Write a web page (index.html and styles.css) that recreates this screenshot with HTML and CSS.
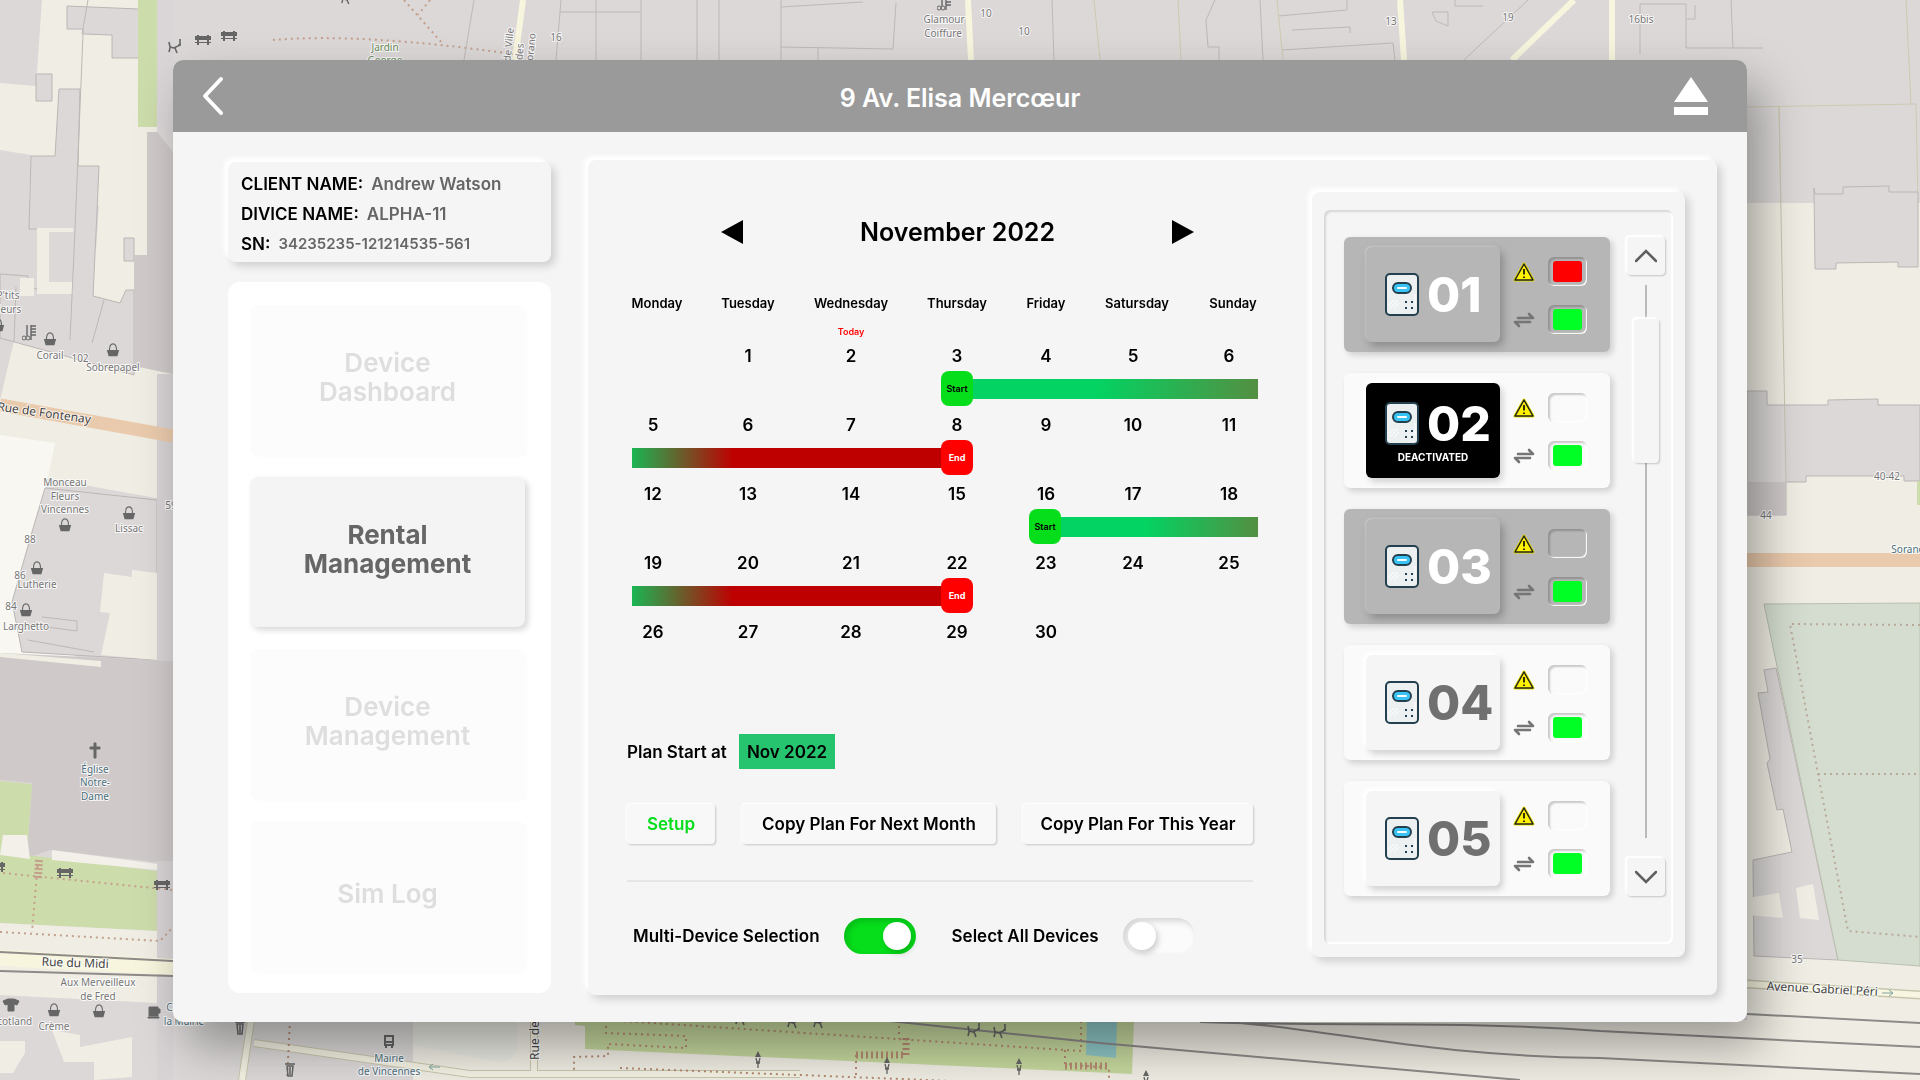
FILE: index.html
```html
<!DOCTYPE html>
<html lang="en">
<head>
<meta charset="utf-8">
<meta name="viewport" content="width=device-width, initial-scale=1">
<title>9 Av. Elisa Mercœur – Rental Management</title>
<link rel="stylesheet" href="styles.css">
</head>
<body>
<svg class="map" viewBox="0 0 1920 1080" preserveAspectRatio="xMidYMid slice" aria-hidden="true">
  <defs>
    <symbol id="basket" viewBox="0 0 14 16"><path d="M3 8C3 3 5 1 7 1s4 2 4 7" fill="none" stroke="#666" stroke-width="1.2"/><path d="M0 8h14l-2 7H2z" fill="#666"/></symbol>
    <symbol id="bench" viewBox="0 0 16 10"><path d="M0 1h16v4H0zM0 7h16v1H0zM2 0h2v10H2zM12 0h2v10h-2z" fill="#666"/></symbol>
    <symbol id="play" viewBox="0 0 14 16"><path d="M1 4l1 5 4 1 6-3V1M2 10l-1 4M7 10l2 5M10 7h3" fill="none" stroke="#666" stroke-width="1.6"/></symbol>
    <symbol id="bin" viewBox="0 0 10 15"><path d="M0 2h10M2 4l1 10h4l1-10zM5 5v8" fill="none" stroke="#666" stroke-width="1.5"/></symbol>
    <symbol id="lamp" viewBox="0 0 8 17"><path d="M4 0l3 6H1z" fill="#666"/><path d="M2 7l1 4h2l1-4M4 11v6M2 12h4" fill="none" stroke="#666" stroke-width="1.3"/></symbol>
    <symbol id="scissors" viewBox="0 0 14 16"><path d="M5 0v11M9 0v15M9 1h5M9 4h5M9 7h5M9 10h5" stroke="#666" stroke-width="1.4"/><circle cx="2" cy="13" r="2" fill="none" stroke="#666"/><circle cx="6" cy="13" r="2" fill="none" stroke="#666"/></symbol>
  </defs>
  <rect width="1920" height="1080" fill="#dcd8d8"/>

  <!-- west side -->
  <g fill="#f0eee4">
    <path d="M42 0h96v127h19v5h-10v123h-13v35h-8l-6 13-27-7 6-90h-3v78l-28 1 4-82H60l-31-3 2-45-31-5V83l36 3z"/>
    <path d="M14 341l159 33v127L0 470v-70z"/>
    <path d="M0 435l55 8-25 120-15 50 85 60-100-10z" fill="#f8f7f1"/>
  </g>
  <g fill="#dcd8d8" stroke="#bcb6b5" stroke-width="1">
    <path d="M67 6l72 3v49h-27V35l-29-1v-5H67zM36 74h16v27H36zM59 89h21l-2 77h21l-2 46-4 84 27 7 6-13h8v85L0 338v-64l28 2v11l8 2 12-3V229H29l2-73h24z"/>
    <path d="M45 488l112 12v160L22 652l-10-50 20-70z"/>
    <path d="M124 238h10v23h-10z"/>
  </g>
  <path d="M20 278h14v18h-14zM37 228h36v66H37z" fill="#f0eee4"/>
  <path d="M49 232h24v50H49z" fill="#dcd8d8"/>
  <path d="M104 573l28 4v-7l25 3v87l-56-5 9-42-10-1z" fill="#f0eee4"/>
  <path d="M134 255h13V132h10l16 20v222l-39-8z" fill="#cfc9c9"/>
  <path d="M157 120l16 20V0h-16z" fill="#dad6d7"/>
  <path d="M138 0h19v127h-19z" fill="#cddcab"/>
  <path d="M0 653l173 8v203L50 850l-23 8 5-75-32-3z" fill="#cfc9c9"/>
  <path d="M0 653l101 8v6l-101-10z" fill="#f0eee4"/>
  <path d="M0 781l32 3-5 71 130 16v60L0 923z" fill="#cddcab"/>
  <path d="M3 835h24l3 24-30-4zM52 850l105 14v6L52 860z" fill="#f2f0e8"/>
  <path d="M0 923l157 8v72L0 995z" fill="#f0eee4"/>
  <path d="M157 374h16v287h-16zM157 861h16v219h-16z" fill="#d8d4d5"/>
  <path d="M52 1030l28 5v12l52-10v40l-38 3v-18H64zM0 1041h25v12l-12 20H0z" fill="#f0eee4"/>
  <path d="M0 405l173 31" stroke="#eacaac" stroke-width="13"/>
  <path d="M0 958l173 9" stroke="#f7f5dd" stroke-width="16"/>
  <path d="M0 952l173 9M0 971l173 5" stroke="#8d8a88" stroke-width="2"/>
  <g fill="none" stroke="#c4a08c" stroke-width="2" stroke-dasharray="2 4">
    <path d="M3 873l170 17M38 860l-6 72M0 932l160 9 13-14M273 40c60-5 140 0 240 14M404 0l38 43M430 0l-12 15"/>
    <path d="M39 860l-1 18" stroke-width="8" stroke-dasharray="2 2"/>
  </g>
  <g fill="none" stroke="#beb8b7" stroke-width="1">
    <path d="M88 0l-6 34M83 34L75 230 70 340M104 300L92 343M16 287l-2 55M474 0l-10 60M561 0l-5 60M596 0v60M560 12h80M42 617l35 4v10l-38-5M28 640l66 12"/>
    <path d="M641 0v60M697 0v60M719 0v60M781 0v60M781 7l82-5M781 47l112 2 3-46M818 47v13M1052 0l2 60M1215 0l-9 20 2 27h11v13M1260 0l3 60M1347 0v10l-69 6M1292 30l58-3v6M1282 50l111-7 2 17M1455 0v6l28 0M1528 0l-64 60M1640 4h46v44h77M1695 5v14h-8M1731 0l2 48M1640 4v50"/>
    <path d="M1432 12h16v14l-12-5z"/>
  </g>
  <g fill="none" stroke="#cfc9b0" stroke-width="1"><path d="M1094 0l6 60M1178 0l3 60M1277 0l6 60M1906 0l5 104M1747 107l169-3 4 200M1779 107l7 375"/></g>
  <g fill="none" stroke="#f7f5dd" stroke-width="6"><path d="M968 0l3 60M1400 0l4 60M1574 0l-62 60M523 0l-8 60M1612 0v60"/></g>

  <!-- east side -->
  <path d="M1747 203h173v860h-173z" fill="#f0eee4"/>
  <g fill="#dcd8d8" stroke="#bcb6b5">
    <path d="M1814 188l1 6h28v-7l46-1v6h29v75h-20v-5l-62 1v6h-21z"/>
    <path d="M1747 391h20v14h61v-5l50-1v6h42v76h-16v-5h-98v6h-20v33h-39z"/>
    <path d="M1776 668l-12 2 4 22-10 1 12 66-3 4 10 47 6-1 9 43-39 8 1 96 84 4z"/>
  </g>
  <path d="M1747 898l32-5 4 25-36-3zM1796 888l17-4 6 36-19-2z" fill="#f0eee4"/>
  <path d="M1786 482h-39v33h39z" fill="#cfc9c9"/>
  <path d="M1764 604l156-1v363l-82-6z" fill="#d5ddd0" stroke="#b9c0ae"/>
  <path d="M1917 481h3v24h-3z" fill="#cddcab"/>
  <path d="M1747 560h173" stroke="#eacaac" stroke-width="14"/>
  <path d="M1779 107l7 375" stroke="#c9c5b2" fill="none"/>
  <path d="M1920 625l-130-1 28 150 30 157 72 6M1818 774h102" fill="none" stroke="#b9a999" stroke-width="2" stroke-dasharray="2 4"/>
  <path d="M1747 984l173 11" stroke="#c8c6ad" stroke-width="9"/><path d="M1747 984l173 11" stroke="#f8f6e2" stroke-width="6"/>

  <!-- south side -->
  <path d="M413 1020h1507v60H413z" fill="#efece3"/>
  <path d="M413 1020h104v28q-4 16-20 14l-84-17z" fill="#e9e9e2"/>
  <path d="M575 1020h559l-2 54-547-25v-23l-10-1z" fill="#c5d79d"/>
  <path d="M1087 1020h30l-1 38-30-3z" fill="#8ec6c6"/>
  <path d="M251 1020l-9 60M254 1043l216 31h330M534 1020v54" fill="none" stroke="#c8c6ad" stroke-width="8"/>
  <path d="M251 1020l-9 60M254 1043l216 31h330M534 1020v54" fill="none" stroke="#f3f1e2" stroke-width="6"/>
  <path d="M606 1020l475 31v-31M606 1020v13l80 3v12l-78-4v12l-34 1v15M620 1068l460 18M899 1026v13M856 1055v22M1065 1050v14l44 4v16M290 1020l-3 60" fill="none" stroke="#b58a72" stroke-width="2" stroke-dasharray="2 4"/>
  <path d="M856 1055h50v-18M1065 1066h44" fill="none" stroke="#b58a72" stroke-width="7" stroke-dasharray="2 3"/>
  <path d="M880 1020l220 23 420 37M1165 1020c150 0 220 35 435 38l320 16M1200 1022c140 5 250-2 400 9l320 16M1747 1014l173 9" fill="none" stroke="#8d8a88" stroke-width="2"/>

  <use href="#play" x="168" y="38" width="14" height="16"/><use href="#bench" x="195" y="35" width="16" height="10"/><use href="#bench" x="221" y="31" width="16" height="10"/><use href="#play" x="341" y="-10" width="12" height="16"/>
  <use href="#scissors" x="22" y="325" width="14" height="16"/><use href="#basket" x="43" y="332" width="14" height="14"/><use href="#basket" x="106" y="343" width="14" height="14"/><use href="#basket" x="-9" y="318" width="14" height="14"/>
  <use href="#basket" x="58" y="518" width="14" height="14"/><use href="#basket" x="122" y="506" width="14" height="14"/><use href="#basket" x="30" y="561" width="14" height="14"/><use href="#basket" x="19" y="603" width="14" height="14"/>
  <use href="#bench" x="57" y="868" width="16" height="10"/><use href="#bench" x="154" y="880" width="16" height="10"/><use href="#bench" x="-11" y="862" width="16" height="10"/>
  <use href="#basket" x="47" y="1003" width="14" height="14"/><use href="#basket" x="92" y="1004" width="14" height="14"/>
  <path d="M3 1001l5-2h6l5 2-2 4-3-1v7H8v-7l-3 1zM149 1007h9v9h-9zM158 1009h2v4h-2zM148 1017h11v1h-11zM94 743h2v15h-2zM90 747h10v2H90z" fill="#666" stroke="#666"/>
  <use href="#bin" x="235" y="1020" width="10" height="15"/><use href="#bin" x="285" y="1062" width="10" height="15"/>
  <path d="M385 1036h8v9h-8zM385 1042h8M386 1046v2M392 1046v2" fill="none" stroke="#666" stroke-width="2"/>
  <use href="#play" x="735" y="1010" width="14" height="16"/><use href="#play" x="787" y="1013" width="14" height="16"/><use href="#play" x="813" y="1013" width="14" height="16"/><use href="#play" x="967" y="1022" width="14" height="16"/><use href="#play" x="993" y="1023" width="14" height="16"/>
  <use href="#lamp" x="754" y="1051" width="8" height="17"/><use href="#lamp" x="883" y="1057" width="8" height="17"/><use href="#lamp" x="1015" y="1058" width="8" height="17"/><use href="#lamp" x="1142" y="1070" width="8" height="17"/>
  <use href="#scissors" x="937" y="-5" width="14" height="16"/>

  <g class="map-text" text-anchor="middle">
    <g fill="#6b8a5a"><text x="385" y="51">Jardin</text><text x="385" y="64">George</text></g>
    <text x="8" y="299">P'tits</text><text x="7" y="313">Fleurs</text><text x="50" y="359">Corail</text><text x="80" y="362">102</text><text x="113" y="371">Sobrepapel</text>
    <text x="65" y="486">Monceau</text><text x="65" y="500">Fleurs</text><text x="65" y="513">Vincennes</text><text x="129" y="532">Lissac</text><text x="30" y="543">88</text><text x="20" y="579">86</text><text x="37" y="588">Lutherie</text><text x="11" y="610">84</text><text x="26" y="630">Larghetto</text><text x="171" y="509">59</text>
    <g fill="#4d707c"><text x="95" y="773">Église</text><text x="95" y="786">Notre-</text><text x="95" y="800">Dame</text><text x="389" y="1062">Mairie</text><text x="389" y="1075">de Vincennes</text><text x="184" y="1011">Café de</text><text x="184" y="1025">la Mairie</text><text x="1908" y="553">Sorano</text></g>
    <text x="98" y="986">Aux Merveilleux</text><text x="98" y="1000">de Fred</text><text x="12" y="1025">Scotland</text><text x="54" y="1030">Crème</text>
    <text x="944" y="23">Glamour</text><text x="943" y="37">Coiffure</text><text x="556" y="41">16</text><text x="986" y="17">10</text><text x="1024" y="35">10</text><text x="1391" y="25">13</text><text x="1508" y="21">19</text><text x="1641" y="23">16bis</text><text x="1887" y="480">40-42</text><text x="1766" y="519">44</text><text x="1797" y="963">35</text>
    <g class="map-street"><text transform="rotate(8 44 414)" x="44" y="417">Rue de Fontenay</text><text x="75" y="967" transform="rotate(2 75 967)">Rue du Midi</text><text x="1822" y="993" transform="rotate(3 1822 993)">Avenue Gabriel Péri</text><text x="539" y="1034" transform="rotate(-90 539 1034)">Rue de la</text></g>
    <text x="512" y="45" transform="rotate(-84 512 45)">de Ville</text><text x="523" y="52" transform="rotate(-84 523 52)">des</text><text x="534" y="50" transform="rotate(-84 534 50)">Sorano</text>
    <path d="M1882 993h10M1889 990l4 3-4 3M440 1067h-10M433 1064l-4 3 4 3" fill="none" stroke="#7ea39d" stroke-width="1"/>
  </g>
</svg>

<svg class="sprite" aria-hidden="true">
  <symbol id="device" viewBox="0 0 34 44">
    <path d="M6 41h4v2H6zM24 41h4v2h-4z" fill="#24404f"/>
    <rect x="1" y="1" width="32" height="41" rx="4" fill="#ecf0f1" stroke="#24404f" stroke-width="2"/>
    <rect x="8" y="10" width="18" height="10" rx="5" fill="#39c3f5" stroke="#24404f" stroke-width="2"/>
    <path d="M13 15h8" stroke="#fff" stroke-width="2" stroke-linecap="round"/>
    <path d="M4 32l5-5M5 35l8-8M9 35l5-5M30 21v12" stroke="#fff" stroke-width="1"/>
    <path d="M20 28h2v2h-2zM26 28h2v2h-2zM20 34h2v2h-2zM26 34h2v2h-2z" fill="#24404f"/>
  </symbol>
  <symbol id="warn" viewBox="0 0 22 20">
    <path d="M11 2L2 18h18z" fill="#fff200" stroke="#e6e000" stroke-width="3" stroke-linejoin="round"/>
    <path d="M11 2L2 18h18z" fill="#fff200" stroke="#222" stroke-width="1.5" stroke-linejoin="round"/>
    <path d="M11 7v5.5M11 14.500v1.500" stroke="#111" stroke-width="1.7"/>
  </symbol>
  <symbol id="swap" viewBox="0 0 22 16">
    <path d="M5 6h15l-4-4M17 10H2l4 4" fill="none" stroke="#757575" stroke-width="2.600" stroke-linecap="round" stroke-linejoin="round"/>
  </symbol>
</svg>

<main class="window">
  <header class="topbar">
    <button class="bare" aria-label="Back"><svg width="24" height="40" viewBox="0 0 24 40"><path d="M20 3L4 20l16 17" fill="none" stroke="#fff" stroke-width="4" stroke-linecap="round" stroke-linejoin="round"/></svg></button>
    <h1>9 Av. Elisa Mercœur</h1>
    <button class="bare eject" aria-label="Eject"><svg width="34" height="40" viewBox="0 0 34 40"><path d="M17 1l17 25H0zM0 31h34v8H0z" fill="#fff"/></svg></button>
  </header>

  <div class="content">
    <aside class="side">
      <dl class="client raised">
        <div><dt>CLIENT NAME:</dt><dd>Andrew Watson</dd></div>
        <div><dt>DIVICE NAME:</dt><dd>ALPHA-11</dd></div>
        <div><dt>SN:</dt><dd class="serial">34235235-121214535-561</dd></div>
      </dl>
      <nav class="menu">
        <button class="menu-item">Device<br>Dashboard</button>
        <button class="menu-item active" aria-current="page">Rental<br>Management</button>
        <button class="menu-item">Device<br>Management</button>
        <button class="menu-item">Sim Log</button>
      </nav>
    </aside>

    <section class="panel raised">
      <div class="planner">
        <div class="month">
          <button class="bare" aria-label="Previous month"><svg width="22" height="24" viewBox="0 0 22 24"><path d="M22 0v24L0 12z"/></svg></button>
          <h2>November 2022</h2>
          <button class="bare" aria-label="Next month"><svg width="22" height="24" viewBox="0 0 22 24"><path d="M0 0v24l22-12z"/></svg></button>
        </div>

        <table class="calendar">
          <colgroup><col class="c-mon"><col class="c-tue"><col class="c-wed"><col class="c-thu"><col class="c-fri"><col class="c-sat"><col class="c-sun"></colgroup>
          <thead><tr><th>Monday</th><th>Tuesday</th><th>Wednesday</th><th>Thursday</th><th>Friday</th><th>Satursday</th><th>Sunday</th></tr></thead>
          <tbody>
            <tr class="today"><td colspan="2"></td><td>Today</td><td colspan="4"></td></tr>
            <tr class="dates"><td></td><td>1</td><td>2</td><td>3</td><td>4</td><td>5</td><td>6</td></tr>
            <tr class="spans"><td colspan="3"></td><td colspan="4"><div class="span from-thu"><span class="pill start">Start</span><span class="bar bar-start"></span></div></td></tr>
            <tr class="dates"><td>5</td><td>6</td><td>7</td><td>8</td><td>9</td><td>10</td><td>11</td></tr>
            <tr class="spans"><td colspan="4"><div class="span to-thu"><span class="bar bar-end"></span><span class="pill end">End</span></div></td><td colspan="3"></td></tr>
            <tr class="dates"><td>12</td><td>13</td><td>14</td><td>15</td><td>16</td><td>17</td><td>18</td></tr>
            <tr class="spans"><td colspan="4"></td><td colspan="3"><div class="span from-fri"><span class="pill start">Start</span><span class="bar bar-start"></span></div></td></tr>
            <tr class="dates"><td>19</td><td>20</td><td>21</td><td>22</td><td>23</td><td>24</td><td>25</td></tr>
            <tr class="spans"><td colspan="4"><div class="span to-thu"><span class="bar bar-end"></span><span class="pill end">End</span></div></td><td colspan="3"></td></tr>
            <tr class="dates"><td>26</td><td>27</td><td>28</td><td>29</td><td>30</td><td></td><td></td></tr>
          </tbody>
        </table>

        <div class="controls">
          <div class="plan"><span>Plan Start at</span><button class="plan-month">Nov 2022</button></div>
          <div class="actions">
            <button class="action setup">Setup</button>
            <button class="action next">Copy Plan For Next Month</button>
            <button class="action year">Copy Plan For This Year</button>
          </div>
          <hr>
          <div class="toggles">
            <label class="toggle">Multi-Device Selection <input type="checkbox" checked></label>
            <label class="toggle">Select All Devices <input type="checkbox"></label>
          </div>
        </div>
      </div>

      <div class="devices raised">
        <div class="well">
          <div class="list">
            <article class="card selected">
              <button class="unit"><span class="unit-row"><svg class="unit-icon"><use href="#device"/></svg>01</span></button>
              <div class="status"><svg class="warn"><use href="#warn"/></svg><span class="socket"><span class="led red"></span></span><svg class="swap"><use href="#swap"/></svg><span class="socket"><span class="led"></span></span></div>
            </article>
            <article class="card">
              <button class="unit off"><span class="unit-row"><svg class="unit-icon"><use href="#device"/></svg>02</span><small>DEACTIVATED</small></button>
              <div class="status"><svg class="warn"><use href="#warn"/></svg><span class="socket"></span><svg class="swap"><use href="#swap"/></svg><span class="socket"><span class="led"></span></span></div>
            </article>
            <article class="card selected">
              <button class="unit"><span class="unit-row"><svg class="unit-icon"><use href="#device"/></svg>03</span></button>
              <div class="status"><svg class="warn"><use href="#warn"/></svg><span class="socket"></span><svg class="swap"><use href="#swap"/></svg><span class="socket"><span class="led"></span></span></div>
            </article>
            <article class="card">
              <button class="unit"><span class="unit-row"><svg class="unit-icon"><use href="#device"/></svg>04</span></button>
              <div class="status"><svg class="warn"><use href="#warn"/></svg><span class="socket"></span><svg class="swap"><use href="#swap"/></svg><span class="socket"><span class="led"></span></span></div>
            </article>
            <article class="card">
              <button class="unit"><span class="unit-row"><svg class="unit-icon"><use href="#device"/></svg>05</span></button>
              <div class="status"><svg class="warn"><use href="#warn"/></svg><span class="socket"></span><svg class="swap"><use href="#swap"/></svg><span class="socket"><span class="led"></span></span></div>
            </article>
          </div>
          <div class="scroller">
            <button class="step" aria-label="Scroll up"><svg width="22" height="14" viewBox="0 0 22 14"><path d="M1 12L11 2l10 10" fill="none" stroke="#5f5f5f" stroke-width="2.500" stroke-linecap="round"/></svg></button>
            <div class="track"><div class="handle"></div></div>
            <button class="step" aria-label="Scroll down"><svg width="22" height="14" viewBox="0 0 22 14"><path d="M1 2l10 10L21 2" fill="none" stroke="#5f5f5f" stroke-width="2.500" stroke-linecap="round"/></svg></button>
          </div>
        </div>
      </div>
    </section>
  </div>
</main>
</body>
</html>
```
FILE: styles.css
```css
* { box-sizing: border-box; }

body {
  margin: 0;
  padding: 60px 173px;
  font-family: Inter, "Open Sans", sans-serif;
  font-size: 17px;
  font-weight: 600;
  color: #000;
  background: #dcd8d8;
}

button {
  margin: 0;
  padding: 0;
  border: 0;
  font: inherit;
  color: inherit;
  cursor: pointer;
}

.bare { display: flex; background: none; }

/* street map behind the window */
.map { position: fixed; inset: 0; width: 100%; height: 100%; z-index: -1; }
.map-text { font: 400 10px "Noto Sans", sans-serif; fill: #777; }
.map-text text { paint-order: stroke; stroke: #ffffffcc; stroke-width: 2px; }
.map-street { font-size: 12px; fill: #444; }
.sprite { position: absolute; width: 0; height: 0; }

.window {
  border-radius: 10px;
  background: #f5f5f5;
  box-shadow: 14px 24px 48px rgba(0, 0, 0, .35);
}

.topbar {
  display: grid;
  grid-template-columns: 1fr auto 1fr;
  align-items: center;
  height: 72px;
  padding: 0 28px;
  border-radius: 10px 10px 0 0;
  background: #9a9a9a;
  color: #fff;
}
.eject { justify-self: end; margin-right: 11px; }
h1, h2 { margin: 0; font-size: 25px; line-height: 32px; font-weight: 600; }
h1 { padding-top: 4px; }

.content {
  display: grid;
  grid-template-columns: 323px 1fr;
  gap: 37px;
  padding: 28px 31px 25px 55px;
}

.raised {
  border-radius: 8px;
  background: #f5f5f5;
  box-shadow: -4px -4px 4px #fff, 4px 4px 8px rgba(0, 0, 0, .16);
}

/* left column */
.side { display: flex; flex-direction: column; gap: 20px; padding-top: 2px; }
.client { height: 100px; margin: 0; padding: 7px 13px; }
.client div { display: flex; gap: 8px; line-height: 30px; }
.client dd { margin: 0; color: #666; }
.client .serial { font-size: 15px; }

.menu {
  display: flex;
  flex-direction: column;
  gap: 22px;
  padding: 23px 26px 22px 22px;
  border-radius: 12px;
  background: #fff;
}
.menu-item {
  height: 150px;
  padding-bottom: 6px;
  border-radius: 8px;
  background: #fcfcfc;
  box-shadow: 2px 2px 4px rgba(0, 0, 0, .02);
  color: #dedede;
  font-size: 26px;
  line-height: 29px;
}
.menu-item.active {
  background: #f4f4f4;
  box-shadow: 3px 3px 6px rgba(0, 0, 0, .16);
  color: #666;
  font-weight: 700;
}

/* main panel */
.panel {
  display: grid;
  grid-template-columns: 1fr 373px;
  gap: 34px;
  margin-bottom: 2px;
  padding: 32px 32px 38px 24px;
}

.month {
  display: flex;
  align-items: center;
  justify-content: space-between;
  margin: 24px 84px 37px 109px;
}

.calendar { width: 100%; border-collapse: collapse; table-layout: fixed; text-align: center; }
.calendar th, .calendar td { padding: 0; }
.calendar th { height: 36px; font-size: 13px; font-weight: 600; }
.c-mon, .c-sun { width: 90px; }
.c-tue { width: 92px; }
.c-wed { width: 114px; }
.c-thu { width: 98px; }
.c-fri { width: 80px; }
.c-sat { width: 102px; }
.today td { height: 16px; font-size: 9px; line-height: 10px; vertical-align: bottom; color: #f00; }
.dates td { height: 34px; padding-top: 4px; line-height: 20px; }
.dates td:first-child, .dates td:nth-child(n+6) { padding-right: 8px; }
.spans td { height: 35px; }
.span { display: flex; align-items: center; }
.from-thu { padding: 0 20px 0 33px; }
.from-fri { padding: 0 20px 0 23px; }
.to-thu { padding: 0 33px 0 20px; }
.pill {
  z-index: 1;
  width: 32px;
  height: 35px;
  border-radius: 8px;
  font-size: 9px;
  line-height: 35px;
}
.start { background: #06de1b; }
.end { background: #f00; color: #fff; font-weight: 700; }
.bar { flex: 1; height: 20px; }
.bar-start { margin-left: -8px; background: linear-gradient(90deg, #03d362 45%, #538f42); }
.bar-end { margin-right: -8px; background: linear-gradient(90deg, #1bb554, #be0000 32%); }

.controls { margin-top: 87px; padding: 0 25px 0 15px; }
.plan { display: flex; align-items: center; gap: 12px; }
.plan-month { height: 35px; padding: 0 8px; background: #27c46f; }
.actions { display: flex; justify-content: space-between; margin-top: 35px; }
.action {
  height: 40px;
  border-radius: 4px;
  background: #f8f8f8;
  box-shadow: -1px -1px 2px #fff, 1px 1px 2px rgba(0, 0, 0, .2);
}
.setup { width: 88px; color: #06de1b; }
.next { width: 254px; }
.year { width: 230px; }
hr { margin: 36px 0; border: 0; border-top: 2px solid #e6e6e6; }
.toggles { display: flex; gap: 36px; padding-left: 6px; }
.toggle { display: flex; align-items: center; gap: 24px; }
.toggle input {
  display: flex;
  appearance: none;
  width: 72px;
  height: 36px;
  margin: 0;
  padding: 4px 5px;
  border-radius: 18px;
  background: #fbfbfb;
  box-shadow: inset 3px 3px 6px rgba(0, 0, 0, .16);
}
.toggle input::before {
  content: "";
  width: 28px;
  height: 28px;
  border-radius: 50%;
  background: #fff;
  box-shadow: 2px 3px 6px rgba(0, 0, 0, .2);
}
.toggle input:checked { justify-content: flex-end; background: #06de1b; }

/* device list */
.devices { padding: 18px 12px 13px; }
.well {
  display: flex;
  justify-content: space-between;
  height: 100%;
  padding: 27px 8px 48px 20px;
  border-radius: 6px;
  box-shadow: inset 2px 2px 2px rgba(0, 0, 0, .12), inset -2px -2px 1px #fff;
}
.list { display: flex; flex-direction: column; gap: 21px; width: 266px; }
.card {
  display: flex;
  gap: 13px;
  height: 115px;
  padding: 10px 22px;
  border-radius: 6px;
  background: #fafafa;
  box-shadow: 3px 3px 6px rgba(0, 0, 0, .16);
}
.unit {
  display: flex;
  flex-direction: column;
  align-items: center;
  justify-content: center;
  width: 134px;
  height: 95px;
  border-radius: 6px;
  background: #f5f5f5;
  box-shadow: -3px -3px 4px #fff, 3px 4px 6px rgba(0, 0, 0, .16);
  color: #707070;
}
.unit-row {
  display: flex;
  align-self: stretch;
  align-items: center;
  gap: 8px;
  padding-left: 19px;
  font-size: 48px;
  line-height: 52px;
  font-weight: 800;
}
.unit-icon { width: 34px; height: 44px; }
.unit small { font-size: 10px; line-height: 14px; font-weight: 700; }
.card.selected { background: #b6b6b6; }
.selected .unit { background: #b6b6b6; box-shadow: -1px -1px 2px rgba(255, 255, 255, .3), 3px 4px 8px rgba(0, 0, 0, .25); color: #fff; }
.unit.off { background: #000; color: #fff; }

.status {
  display: grid;
  grid-template-columns: 22px 39px;
  grid-template-rows: 29px 29px;
  gap: 19px 13px;
  align-items: center;
  padding-top: 10px;
}
.warn { width: 22px; height: 20px; }
.swap { width: 22px; height: 16px; }
.socket {
  height: 29px;
  padding: 4px 5px;
  border-radius: 6px;
  box-shadow: inset 2px 2px 2px rgba(0, 0, 0, .2), inset -1px -1px 1px #fff;
}
.led { display: block; height: 21px; border-radius: 3px; background: #00ff25; }
.led.red { background: #f00; }

.scroller { display: flex; flex-direction: column; align-items: center; width: 38px; }
.step {
  display: flex;
  align-items: center;
  justify-content: center;
  width: 38px;
  height: 38px;
  border-radius: 4px;
  background: #f5f5f5;
  box-shadow: -2px -2px 2px #fff, 1px 1px 2px rgba(0, 0, 0, .2);
}
.track {
  display: flex;
  flex: 1;
  justify-content: center;
  width: 2px;
  margin: 10px 0 20px;
  padding-top: 34px;
  background: #bababa;
}
.handle {
  flex: none;
  width: 25px;
  height: 144px;
  border-radius: 4px;
  background: #f5f5f5;
  box-shadow: -2px -2px 2px #fff, 1px 1px 2px rgba(0, 0, 0, .2);
}
```
